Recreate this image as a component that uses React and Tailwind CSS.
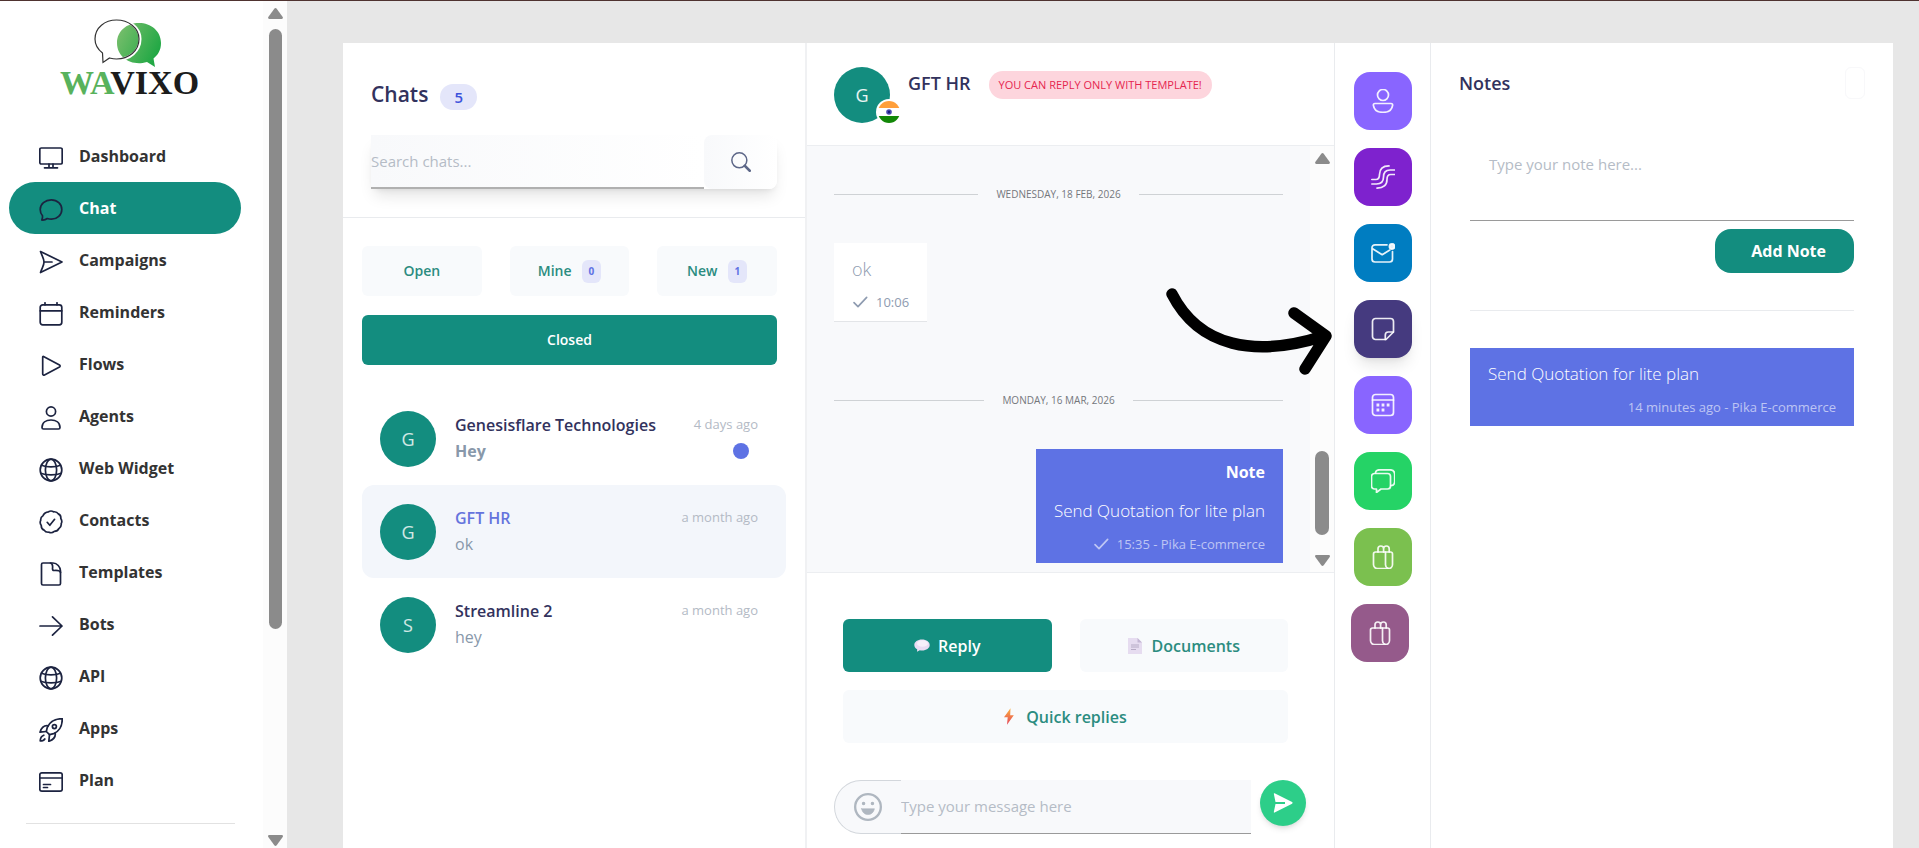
import React, { useState } from 'react';

// Shared wrapper for the 24px line icons
function Icon({ children, className = 'size-6', width = 1.7 }) {
  return (
    <svg
      viewBox="0 0 24 24"
      className={className}
      fill="none"
      stroke="currentColor"
      strokeWidth={width}
      strokeLinecap="round"
      strokeLinejoin="round"
      aria-hidden="true"
    >
      {children}
    </svg>
  );
}

const globe = (
  <>
    <circle cx="12" cy="12" r="10.800" />
    <ellipse cx="12" cy="12" rx="5.600" ry="10.800" />
    <path d="M2.500 7.200c5 2.200 14 2.200 19 0M1.800 15.200c5 2.200 15.400 2.200 20.400 0" />
  </>
);

const gift = (
  <>
    <path d="M4.500 7h15a2 2 0 0 1 2 2v10.500a4 4 0 0 1-4 4h-11a4 4 0 0 1-4-4V9a2 2 0 0 1 2-2z" />
    <path d="M14.500 7v12.500a4 4 0 0 0 3 4M7 7V3.800a2.800 2.800 0 0 1 5.600 0V7M12.600 3.800a2.800 2.800 0 0 1 5.600 0V7" />
  </>
);

const menu = [
  {
    label: 'Dashboard',
    icon: (
      <>
        <rect x="0.800" y="2" width="22.400" height="16" rx="1.500" />
        <path d="M10 18v3.500M14 18v3.500M5.500 21.800h13" />
      </>
    ),
  },
  {
    label: 'Chat',
    icon: <path d="M12.300 1.800c6 0 10.500 4.200 10.500 9.600s-4.700 9.800-10.300 9.800c-1.500 0-3-.2-4.300-.7-1.400 1.200-3.400 1.700-5.400 1.500.6-1.400.9-2.900.7-4.300C2 15.900 1.200 13.800 1.200 11.400 1.200 6 6.200 1.800 12.300 1.800z" />,
  },
  {
    label: 'Campaigns',
    icon: <path d="M1.500 1.500 23 12 1.500 22.500C3.500 17 5 15.500 5 12S3.500 7 1.500 1.500zM5 12h8" />,
  },
  {
    label: 'Reminders',
    icon: (
      <>
        <rect x="1.200" y="2.800" width="21.600" height="20" rx="2.500" />
        <path d="M1.200 8.800h21.600M6 .8v2M18 .8v2" />
      </>
    ),
  },
  { label: 'Flows', icon: <path d="M4.500 2.500 20.500 11c.8.500.8 1.500 0 2L5.500 21c-.8.400-1.800 0-1.800-1V3.500c0-.8.300-1.200.8-1z" /> },
  {
    label: 'Agents',
    icon: (
      <>
        <circle cx="12" cy="5.500" r="4.600" />
        <path d="M3 21.500C3 16.500 7 14 12 14s9 2.500 9 7.500c0 1-.6 1.500-1.500 1.500h-15C3.600 23 3 22.500 3 21.500z" />
      </>
    ),
  },
  { label: 'Web Widget', icon: globe },
  {
    label: 'Contacts',
    icon: (
      <>
        <path d="M9.500 1.800q2.500-1.600 5 0 3.400-.4 4.800 2.100 2.900 1.300 2.500 4.600 1.800 2.700.4 5.200.4 3.200-2.200 4.700-1.300 3-4.700 3-2.600 2.200-5.300.8-3.400.4-4.900-2.100-3-1.200-2.800-4.600-1.900-2.600-.6-5.100-.3-3.300 2.300-4.700 1.600-3.600 5.500-3.900z" />
        <path d="M8.200 12.300l2.600 3 4.800-6" />
      </>
    ),
  },
  {
    label: 'Templates',
    icon: (
      <>
        <path d="M14 1H4a1.500 1.500 0 0 0-1.500 1.500v19A1.500 1.500 0 0 0 4 23h16a1.500 1.500 0 0 0 1.500-1.500V9C21.500 5 18 1 14 1z" />
        <path d="M11.500 1c2 .5 2.500 2 2 5.500 0 1.500.5 2 1.500 2 3.500-.3 6 0 6.500 2" />
      </>
    ),
  },
  { label: 'Bots', icon: <path d="M1 12h22M13.500 2.800 23 12l-9.500 9.200" /> },
  { label: 'API', icon: globe },
  {
    label: 'Apps',
    icon: (
      <>
        <path d="M23.300.7c-7.500 0-12.300 2.600-15 8.600l-1 4.200 3.200 3.200 4.200-1C20.700 13 23.300 8.200 23.300.7z" />
        <circle cx="15.400" cy="8.600" r="2" />
        <path d="M9.200 7.800c-4-.6-6.500 1-8.200 6.400l6.300-.7M16.200 14.800c.6 4-1 6.800-6.400 8.500l.7-6.600M4.800 17.200c-2.500.8-3.500 2.500-3.600 5.800 2.700 0 4-.8 4.600-2" />
      </>
    ),
  },
  {
    label: 'Plan',
    icon: (
      <>
        <rect x="0.800" y="2.800" width="22.400" height="18.400" rx="2" />
        <path d="M.8 8h22.400M4.500 14.500h7M4.500 17.500h4" />
      </>
    ),
  },
];

const filters = [
  { label: 'Open' },
  { label: 'Mine', count: 0 },
  { label: 'New', count: 1 },
];

const chats = [
  { name: 'Genesisflare Technologies', message: 'Hey', time: '4 days ago', unread: true },
  { name: 'GFT HR', message: 'ok', time: 'a month ago' },
  { name: 'Streamline 2', message: 'hey', time: 'a month ago' },
];

const tools = [
  {
    label: 'Contact',
    color: 'bg-[#8965ff]',
    icon: (
      <>
        <circle cx="12" cy="6" r="5.500" />
        <path d="M4 14.500h16c1.200 0 1.800.8 1.600 1.800C21 20.500 17.500 23.300 12 23.300S3 20.500 2.400 16.300c-.2-1 .4-1.800 1.600-1.800z" />
      </>
    ),
  },
  {
    label: 'Streams',
    color: 'bg-[#7e22ce]',
    icon: <path d="M.8 14.500h4c2.700 0 3.700-1.500 3.700-5C8.500 4 11.500.9 18 .9M.8 19h4.700c5 0 7-2.500 7-7s2-7 6.500-7h4.500M6 23.100c6.500 0 10-3 10-8.600 0-3.500 1-5 3.700-5h3.800" />,
  },
  {
    label: 'Mail',
    color: 'bg-[#007dc1]',
    icon: (
      <>
        <path d="M16 3.800H4A3 3 0 0 0 1 6.800V18a3 3 0 0 0 3 3h14.500a3 3 0 0 0 3-3v-7.500M1.200 7.500l10 6.200 7.600-4.600" />
        <circle cx="21" cy="5.500" r="2.600" fill="currentColor" />
      </>
    ),
  },
  {
    label: 'Notes',
    color: 'bg-[#453a7f] shadow-lg',
    icon: (
      <>
        <path d="M4.500 1.500h15a3 3 0 0 1 3 3V15l-7.500 7.500H4.500a3 3 0 0 1-3-3v-15a3 3 0 0 1 3-3z" />
        <path d="M22.300 15h-5a3 3 0 0 0-3 3v4.500" />
      </>
    ),
  },
  {
    label: 'Calendar',
    color: 'bg-[#8965ff]',
    icon: (
      <>
        <rect x="1.500" y="1.500" width="21" height="21" rx="3" />
        <path d="M1.500 7h21" />
        <path d="M5.500 12h2.800M10.600 12h2.800M15.700 12h2.800M5.500 17h2.800M10.600 17h2.800" strokeWidth="2.800" strokeLinecap="butt" />
      </>
    ),
  },
  {
    label: 'Messages',
    color: 'bg-[#25d366]',
    icon: (
      <>
        <path d="M3.500 4.500h13a3 3 0 0 1 3 3V17a3 3 0 0 1-3 3H10l-4.500 3.500V20h-2a3 3 0 0 1-3-3V7.500a3 3 0 0 1 3-3z" />
        <path d="M4.500 4c.2-2 1.500-3.200 4-3.200H19c3 0 4.700 2 4.700 4.700v7c0 2.300-1.500 4-4 4.200" />
      </>
    ),
  },
  { label: 'Orders', color: 'bg-[#7bc04f]', icon: gift },
  { label: 'Rewards', color: 'bg-[#955a8b]', icon: gift },
];

function Logo() {
  return (
    <div className="flex flex-col items-center">
      <svg viewBox="0 0 68 48" className="h-12 w-[68px]" aria-hidden="true">
        <defs>
          <linearGradient id="bubble" x1="0" y1="0" x2="1" y2="0.500">
            <stop offset="0" stopColor="#7fc06f" />
            <stop offset="1" stopColor="#22a845" />
          </linearGradient>
        </defs>
        <path d="M45 4c12 0 22 8 22 20 0 7-3 12-7.500 15.500L61 48l-8-5c-3 1-6 1.200-8 1.200-12 0-22-8-22-20.200S33 4 45 4z" fill="url(#bubble)" />
        <path
          d="M23.500 1C35 1 46 8.500 46 20c0 12-10.500 20.500-22.500 20.500-2.500 0-5-.5-7-1L9 43.500l-.5-9.500C4 30.500 1 26 1 20 1 8.500 12 1 23.500 1z"
          fill="none"
          stroke="#fff"
          strokeWidth="3"
        />
        <path
          d="M22.500 1C34 1 45 8.500 45 20c0 12-10.500 20-22.500 20-2.500 0-5-.5-7-1L9 43.500 8.500 34C4 30.500 1 26 1 20 1 8.500 11 1 22.500 1z"
          fill="none"
          stroke="#333"
          strokeWidth="1.200"
        />
      </svg>
      <span className="pl-1 font-['Liberation_Serif',serif] text-[34px] leading-8 font-bold text-[#1c1c1c]">
        <span className="text-[#58b25c]">WA</span>VIXO
      </span>
    </div>
  );
}

// Scroll track with round thumb and arrow heads
function ScrollTrack({ thumb, className }) {
  return (
    <div className={`flex w-6 shrink-0 flex-col items-center justify-between bg-[#fcfcfc] ${className}`} aria-hidden="true">
      <svg viewBox="0 0 15 11" className="h-[11px] w-[15px] shrink-0 fill-[#8b8b8b]">
        <path d="M6.300.8a1.500 1.500 0 0 1 2.400 0l6 8.200c.6 1 0 2-1 2H1.300c-1 0-1.600-1-1-2z" />
      </svg>
      <div className="flex w-full flex-1 flex-col items-center">{thumb}</div>
      <svg viewBox="0 0 15 11" className="h-[11px] w-[15px] shrink-0 rotate-180 fill-[#8b8b8b]">
        <path d="M6.300.8a1.500 1.500 0 0 1 2.400 0l6 8.200c.6 1 0 2-1 2H1.300c-1 0-1.600-1-1-2z" />
      </svg>
    </div>
  );
}

function Sidebar() {
  return (
    <aside className="flex w-[287px] shrink-0 bg-white">
      <div className="flex-1">
        <div className="pt-[18px] pr-7 pb-[31px] pl-5">
          <Logo />
        </div>
        <nav className="pr-[22px] pl-[9px]">
          {menu.map((item) => (
            <a
              key={item.label}
              href="#"
              className={
                item.label === 'Chat'
                  ? 'flex h-[52px] items-center gap-4 rounded-full bg-[#138d7f] pl-[30px] text-base font-bold text-white'
                  : 'flex h-[52px] items-center gap-4 pl-[30px] text-base font-bold text-[#333]'
              }
            >
              <span className="pt-1 text-[#1c2340]">
                <Icon>{item.icon}</Icon>
              </span>
              {item.label}
            </a>
          ))}
        </nav>
        <hr className="mt-[17px] mr-7 ml-[26px] border-[#e2e2e2]" />
      </div>
      <ScrollTrack className="pt-[7px] pb-0.5" thumb={<div className="mt-2.5 h-[600px] w-[13px] rounded-full bg-[#8b8b8b]" />} />
    </aside>
  );
}

function ChatList() {
  const [search, setSearch] = useState('');

  return (
    <section className="border-r-2 border-[#f0f1f3]">
      <div className="border-b border-[#e9ebee] px-7 pt-[30px] pb-7">
        <div className="flex h-12 items-center gap-3">
          <h2 className="pb-1 text-[21px] font-semibold text-[#32325d]">Chats</h2>
          <span className="rounded-full bg-[#e4e6fa] px-3.5 py-0.5 text-[15px] font-semibold text-[#3c53dc]">5</span>
        </div>
        <div className="mt-3.5 flex h-[54px] rounded-lg bg-white shadow-lg">
          <input
            type="search"
            aria-label="Search chats"
            value={search}
            onChange={(e) => setSearch(e.target.value)}
            placeholder="Search chats..."
            className="min-w-0 flex-1 border-b-2 border-[#b0b0b0] bg-gradient-to-r from-[#f8f9fb] to-white text-[15px] outline-none placeholder:text-[#b5bcc6]"
          />
          <button aria-label="Search" className="flex w-[73px] items-center justify-center rounded-lg bg-gradient-to-r from-[#f8f9fb] to-white text-[#5d6788]">
            <Icon className="size-5" width={1.8}>
              <circle cx="10" cy="10" r="9" />
              <path d="M16.500 16.500l6 6" strokeWidth="3" />
            </Icon>
          </button>
        </div>
      </div>

      <div className="px-[19px] pt-7">
        <div className="grid grid-cols-3 gap-x-7 gap-y-[19px] pr-[9px]">
          {filters.map((filter) => (
            <button key={filter.label} className="flex h-[50px] items-center justify-center gap-2.5 rounded-md bg-[#f8fafc] text-sm font-semibold text-[#2b8c80]">
              {filter.label}
              {filter.count !== undefined && (
                <span className="rounded-md bg-[#e4e6fa] px-[7px] py-1 text-[10px] leading-[15px] font-bold text-[#5e72e4]">{filter.count}</span>
              )}
            </button>
          ))}
          <button className="col-span-3 h-[50px] rounded-md bg-[#138d7f] text-sm font-semibold text-white">Closed</button>
        </div>

        <ul className="mt-[27px]">
          {chats.map((chat) => (
            <li
              key={chat.name}
              className={
                chat.name === 'GFT HR'
                  ? 'flex h-[93px] items-center gap-[19px] rounded-xl bg-[#f3f6fb] pr-7 pl-[18px]'
                  : 'flex h-[93px] items-center gap-[19px] pr-7 pl-[18px]'
              }
            >
              <span className="flex size-14 shrink-0 items-center justify-center rounded-full bg-[#138d7f] text-lg text-white/80">{chat.name[0]}</span>
              <div className="min-w-0 flex-1">
                <div className="flex items-center justify-between">
                  <h3 className={chat.name === 'GFT HR' ? 'text-base font-semibold text-[#6574dd]' : 'text-base font-semibold text-[#32325d]'}>{chat.name}</h3>
                  <span className="text-[13px] text-[#b3bac5]">{chat.time}</span>
                </div>
                <div className="flex items-center justify-between">
                  <p className={chat.unread ? 'text-base leading-7 font-bold text-[#8898aa]' : 'text-base leading-7 text-[#8898aa]'}>{chat.message}</p>
                  {chat.unread && <span className="mr-[9px] size-4 rounded-full bg-[#5e72e4]" />}
                </div>
              </div>
            </li>
          ))}
        </ul>
      </div>
    </section>
  );
}

function DateDivider({ children }) {
  return (
    <div className="flex items-center gap-[18px]">
      <hr className="flex-1 border-[#cfd2d5]" />
      <span className="text-[10px] leading-4 text-[#74777b]">{children}</span>
      <hr className="flex-1 border-[#cfd2d5]" />
    </div>
  );
}

function Check() {
  return (
    <Icon className="size-4" width={2.500}>
      <path d="M3 13l6 6L22 5" />
    </Icon>
  );
}

function Conversation() {
  return (
    <section className="flex flex-col border-r border-[#e9ebee]">
      <header className="flex h-[103px] items-start border-b border-[#eceef1] pt-6 pl-[27px]">
        <div className="relative size-14 shrink-0">
          <span className="flex size-14 items-center justify-center rounded-full bg-[#138d7f] text-lg text-white/90">G</span>
          <svg viewBox="0 0 26 26" className="absolute -right-3 -bottom-0.5 size-[26px]" aria-label="India">
            <clipPath id="flag">
              <circle cx="13" cy="13" r="11" />
            </clipPath>
            <circle cx="13" cy="13" r="13" fill="#fff" />
            <g clipPath="url(#flag)">
              <path d="M0 0h26v9H0z" fill="#ff9f3a" />
              <path d="M0 17h26v9H0z" fill="#138808" />
            </g>
            <circle cx="13" cy="13" r="2.800" fill="#4a4ab0" />
            <circle cx="13" cy="13" r="1.200" fill="#1a1a80" />
          </svg>
        </div>
        <h2 className="ml-[18px] pt-0.5 text-lg leading-7 font-semibold text-[#32325d]">GFT HR</h2>
        <span className="mt-1 ml-[18px] rounded-full bg-[#fdd5dd] px-2.5 text-[11px] leading-7 text-[#e5254f]">YOU CAN REPLY ONLY WITH TEMPLATE!</span>
      </header>

      <div className="flex bg-[#f8f9fb]">
        <div className="flex-1 px-[27px] pt-10 pb-[9px]">
          <DateDivider>WEDNESDAY, 18 FEB, 2026</DateDivider>
          <div className="mt-[41px] flex">
            <div className="border-b border-[#e3e5e8] bg-white px-[18px] pt-3 pb-2 text-[#8e9bb0]">
              <p className="text-lg leading-7 font-light">ok</p>
              <p className="flex items-center gap-2 pt-2 text-[13px] leading-[22px]">
                <Check />
                10:06
              </p>
            </div>
          </div>
          <div className="mt-[70px]">
            <DateDivider>MONDAY, 16 MAR, 2026</DateDivider>
          </div>
          <div className="mt-[41px] flex justify-end">
            <div className="bg-[#5e72e4] px-[18px] pt-2.5 pb-2 text-right text-white">
              <h4 className="text-base leading-[26px] font-bold">Note</h4>
              <p className="pt-3 text-[17px] leading-7 font-light">Send Quotation for lite plan</p>
              <p className="flex items-center justify-end gap-2 pt-2 text-[13px] leading-[22px] text-white/60">
                <Check />
                15:35 - Pika E-commerce
              </p>
            </div>
          </div>
        </div>
        <ScrollTrack className="pt-[7px] pb-1.5" thumb={<div className="mt-auto mb-5 h-[84px] w-[14px] rounded-full bg-[#8b8b8b]" />} />
      </div>

      <footer className="border-t border-[#eceef1]">
        <div className="grid grid-cols-2 gap-x-7 gap-y-[18px] pt-[46px] pr-[46px] pl-9">
          <button className="flex h-[53px] items-center justify-center gap-2 rounded-md bg-[#138d7f] text-base font-semibold text-white">
            <svg viewBox="0 0 16 14" className="h-3.5 w-4" aria-hidden="true">
              <path d="M8 .5c4.400 0 7.700 2.400 7.700 5.500S12.400 11.500 8 11.500c-.8 0-1.500-.1-2.200-.2L3 12.800l.2-2.500C1.400 9.300.3 7.800.3 6 .3 2.900 3.600.5 8 .5z" fill="#e9dcf3" />
              <ellipse cx="8.500" cy="4.500" rx="5.500" ry="3.200" fill="#f6f0fa" />
            </svg>
            Reply
          </button>
          <button className="flex h-[53px] items-center justify-center gap-2.5 rounded-md bg-[#f8fafc] text-base font-semibold text-[#2b8c80]">
            <svg viewBox="0 0 14 16" className="h-4 w-3.5" aria-hidden="true">
              <path d="M0 0h9.500L14 4.500V16H0z" fill="#e6dcf0" />
              <path d="M9.500 0v4.500H14z" fill="#c3b6d3" />
              <path d="M3 7h8M3 9h8M3 11.500h5" stroke="#b1a5bf" strokeWidth="0.900" />
            </svg>
            Documents
          </button>
          <button className="col-span-2 flex h-[53px] items-center justify-center gap-3 rounded-md bg-[#f8fafc] text-base font-semibold text-[#2b8c80]">
            <svg viewBox="0 0 10 17" className="h-[17px] w-2.5" aria-hidden="true">
              <defs>
                <linearGradient id="bolt" x1="0" y1="0" x2="0" y2="1">
                  <stop offset="0" stopColor="#fbb03b" />
                  <stop offset="1" stopColor="#e4455d" />
                </linearGradient>
              </defs>
              <path d="M6.500.2 0 9.300h3.700L3 16.800l6.800-9.600H6.200z" fill="url(#bolt)" />
            </svg>
            Quick replies
          </button>
        </div>
        <div className="flex items-start gap-[9px] pt-[37px] pr-7 pb-3 pl-[27px]">
          <div className="flex h-[54px] min-w-0 flex-1">
            <button aria-label="Emoji" className="flex w-[67px] items-center rounded-l-full border border-r-0 border-[#d3d7dc] bg-[#f8f9fb] pl-[19px] text-[#afb7c0]">
              <Icon className="size-7" width={2}>
                <circle cx="12" cy="12" r="11" />
                <circle cx="8.200" cy="9" r="1" fill="currentColor" strokeWidth="1" />
                <circle cx="15.800" cy="9" r="1" fill="currentColor" strokeWidth="1" />
                <path d="M6.500 13.500h11c-.6 3-2.700 5-5.500 5s-4.900-2-5.500-5z" fill="currentColor" strokeWidth="0.500" />
              </Icon>
            </button>
            <input
              aria-label="Message"
              placeholder="Type your message here"
              className="min-w-0 flex-1 border-b border-[#9a9a9a] bg-[#f8f9fb] text-[15px] outline-none placeholder:text-[#b5bcc6]"
            />
          </div>
          <button aria-label="Send" className="flex size-[46px] items-center justify-center rounded-full bg-[#2dce89] text-white shadow-md">
            <svg viewBox="0 0 20 20" className="size-5" fill="currentColor" aria-hidden="true">
              <path d="M.8.800c0-.5.300-.7.800-.5l17.500 8.800c.6.400.6 1.200 0 1.600L1.600 19.600c-.5.200-.8 0-.8-.5L2.500 11H12V9H2.500z" />
            </svg>
          </button>
        </div>
      </footer>
    </section>
  );
}

function ToolRail() {
  return (
    <nav className="flex flex-col items-center gap-[18px] border-r border-[#e9ebee] pt-[29px]" aria-label="Tools">
      {tools.map((tool) => (
        <button
          key={tool.label}
          aria-label={tool.label}
          className={`flex size-[58px] items-center justify-center rounded-2xl text-white/90 ${tool.color} ${tool.label === 'Rewards' ? 'mr-1.5' : ''}`}
        >
          <Icon>{tool.icon}</Icon>
        </button>
      ))}
    </nav>
  );
}

function Notes() {
  const [note, setNote] = useState('');

  return (
    <section>
      <div className="flex items-start justify-between px-7 pt-6">
        <h2 className="pt-0.5 text-lg leading-7 font-semibold text-[#32325d]">Notes</h2>
        <button aria-label="Close" className="h-8 w-5 rounded-md border border-[#f8f8fa]" />
      </div>
      <div className="px-[39px] pt-9">
        <textarea
          aria-label="Note"
          value={note}
          onChange={(e) => setNote(e.target.value)}
          placeholder="Type your note here..."
          className="block h-[86px] w-full resize-none border-b border-[#9a9a9a] px-[19px] py-[18px] text-[15px] outline-none placeholder:text-[#b5bcc6]"
        />
        <div className="flex justify-end pt-2">
          <button className="h-11 rounded-2xl bg-[#138d7f] pr-7 pl-9 text-base font-bold text-white">Add Note</button>
        </div>
        <hr className="my-[37px] border-[#e9ebee]" />
        <div className="bg-[#5e72e4] px-[18px] pt-3 pb-2 text-white">
          <p className="text-[17px] leading-7 font-light">Send Quotation for lite plan</p>
          <p className="pt-2 text-right text-[13px] leading-[22px] text-white/60">14 minutes ago - Pika E-commerce</p>
        </div>
      </div>
    </section>
  );
}

function App() {
  return (
    <div className="relative flex min-h-screen border-t border-[#4f3330] bg-[#e7e7e7] font-['Open_Sans','Noto_Sans',sans-serif]">
      <Sidebar />
      <main className="flex flex-1 pt-[42px] pr-[26px] pl-14">
        <div className="relative grid flex-1 grid-cols-[464fr_528fr_96fr_462fr] bg-white">
          <ChatList />
          <Conversation />
          <ToolRail />
          <Notes />

          {/* Hand drawn arrow that points at the notes tool */}
          <svg viewBox="0 0 170 96" className="pointer-events-none absolute top-[243px] left-[822px] h-24 w-[170px]" fill="none" stroke="#000" strokeWidth="11.500" strokeLinecap="round" strokeLinejoin="round" aria-hidden="true">
            <path d="M7 8C34 61 90 72 159 50M129 27l32 23-21 33" />
          </svg>
        </div>
      </main>
    </div>
  );
}

export default App;
